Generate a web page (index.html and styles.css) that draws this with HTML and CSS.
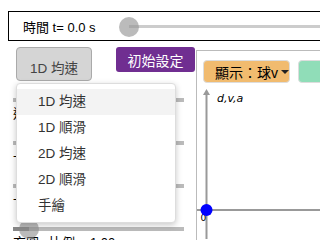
FILE: index.html
```html
<!DOCTYPE html>
<html>
	<head>
		<link rel="stylesheet" href="styles.css">
	</head>
	<body>
		<div class="timebar">
			<span class="time-label">時間 t= 0.0 s</span>
			<div class="slider">
				<div class="slider-track"></div>
				<div class="slider-thumb"></div>
			</div>
		</div>

		<div class="main">
			<div class="left">
				<div class="btn-row">
					<div class="dropdown">
						<button class="mode-btn">1D 均速</button>
						<ul class="menu">
							<li class="active">1D 均速</li>
							<li>1D 順滑</li>
							<li>2D 均速</li>
							<li>2D 順滑</li>
							<li>手繪</li>
						</ul>
					</div>
					<button class="reset-btn">初始設定</button>
				</div>

				<div class="ctrls">
					<div class="ctrl">
						<div class="track"></div>
						<div class="ctrl-label">速度 v = 1.00</div>
					</div>
					<div class="ctrl">
						<div class="track"></div>
						<div class="ctrl-label">一 加速度 a = 0.00</div>
					</div>
					<div class="ctrl">
						<div class="track"></div>
						<div class="ctrl-label">一 初位置 d = 0.00</div>
					</div>
					<div class="ctrl">
						<div class="track">
							<span class="track-fill"></span>
							<span class="track-knob"></span>
						</div>
						<div class="ctrl-label">方圓 x比例 = 1.00</div>
					</div>
				</div>
			</div>

			<div class="graph">
				<div class="graph-btns">
					<button class="show-btn">顯示：球v<span class="caret"></span></button>
					<button class="plot-btn"><span class="plot-text">圖表</span></button>
				</div>
				<svg class="plot" width="124" height="150" viewBox="0 0 124 150">
					<line x1="0" y1="121" x2="124" y2="121" stroke="#999" stroke-width="2"/>
					<line x1="9.5" y1="5" x2="9.5" y2="150" stroke="#999" stroke-width="2"/>
					<polygon points="9.5,0 6,6 13,6" fill="#999"/>
					<text x="20" y="13" class="axis-name">d,v,a</text>
					<text x="3.5" y="132" class="axis-zero">0</text>
					<circle cx="9.5" cy="121" r="6" fill="#0000ff"/>
				</svg>
			</div>
		</div>
	</body>
</html>
```

FILE: styles.css
```css
html, body {
	margin: 0;
	width: 320px;
	height: 240px;
	overflow: hidden;
}

body {
	font-family: "Liberation Sans", "Noto Sans CJK TC", sans-serif;
	font-size: 13px;
	color: #000;
	background: #fff;
}

button {
	font-family: inherit;
	margin: 0;
	cursor: pointer;
}

/* time bar */
.timebar {
	margin: 11px 0 0 8px;
	height: 28px;
	border: 1px solid #000;
	border-right: 0;
	display: flex;
	align-items: center;
}
.time-label {
	width: 96px;
	padding-left: 14px;
	flex: none;
}
.slider {
	position: relative;
	flex: 1;
	height: 20px;
	margin-top: 2px;
}
.slider-track {
	position: absolute;
	left: 10px;
	right: 0;
	top: 8px;
	height: 3px;
	background: #ccc;
}
.slider-thumb {
	position: absolute;
	left: 0;
	top: 0;
	width: 20px;
	height: 20px;
	border-radius: 50%;
	background: rgba(150, 150, 150, 0.65);
}

/* main area */
.main {
	display: flex;
	margin-top: 6px;
}
.left {
	width: 196px;
	flex: none;
}
.btn-row {
	display: flex;
	justify-content: space-between;
	align-items: flex-start;
	padding: 0 1px 0 16px;
}

.dropdown {
	position: relative;
}
.mode-btn {
	display: flex;
	align-items: center;
	box-sizing: border-box;
	height: 34px;
	padding: 5px 13px 0;
	font-size: 13.5px;
	color: #444;
	background: #d5d5d5;
	border: 1px solid #aaa;
	border-radius: 4px;
}
.reset-btn {
	box-sizing: border-box;
	width: 79px;
	height: 25px;
	padding: 0;
	font-size: 14px;
	color: #fff;
	background: #702e91;
	border: 0;
	border-radius: 3px;
}

.menu {
	position: absolute;
	z-index: 2;
	left: 0;
	top: 36px;
	box-sizing: border-box;
	width: 160px;
	height: 140px;
	margin: 0;
	padding: 5px 0 3px;
	list-style: none;
	background: #fff;
	border: 1px solid #ddd;
	border-radius: 4px;
	box-shadow: 0 2px 6px rgba(0, 0, 0, 0.22);
}
.menu li {
	height: 26px;
	line-height: 26px;
	padding-left: 21px;
	font-size: 13.5px;
	color: #333;
}
.menu li.active {
	background: #f3f3f3;
}

/* sliders under the menu */
.ctrls {
	margin-top: 17px;
	padding-left: 13px;
}
.ctrl {
	width: 171px;
	height: 43px;
}
.track {
	position: relative;
	height: 4px;
	background: #bbb;
}
.track-fill {
	position: absolute;
	left: 0;
	top: 0;
	width: 16px;
	height: 4px;
	background: #888;
}
.track-knob {
	position: absolute;
	left: 6px;
	top: -8px;
	width: 20px;
	height: 20px;
	border-radius: 50%;
	background: rgba(140, 140, 140, 0.6);
}
.ctrl-label {
	margin-top: 5px;
	line-height: 14px;
	white-space: nowrap;
}

/* graph */
.graph {
	flex: 1;
	margin-top: 3px;
	border-top: 1px solid #bbb;
	border-left: 1px solid #bbb;
	min-width: 0;
}
.graph-btns {
	display: flex;
	gap: 8px;
	padding: 9px 0 0 6px;
	white-space: nowrap;
}
.show-btn {
	display: flex;
	align-items: center;
	box-sizing: border-box;
	width: 97px;
	height: 23px;
	padding: 0 0 0 11px;
	font-size: 14px;
	color: #000;
	background: #f1bb6f;
	border: 1px solid #ddd;
	border-radius: 4px;
}
.caret {
	width: 0;
	height: 0;
	margin-left: 3px;
	border-left: 4px solid transparent;
	border-right: 4px solid transparent;
	border-top: 4px solid #222;
}
.plot-btn {
	flex: none;
	display: flex;
	align-items: center;
	box-sizing: border-box;
	width: 80px;
	height: 23px;
	padding: 0;
	font-size: 14px;
	background: #90ddb8;
	border: 1px solid #ddd;
	border-radius: 4px;
}
.plot-text {
	margin-left: 24px;
}
.plot {
	display: block;
	margin-top: 6px;
}
.axis-name {
	font-family: "DejaVu Sans", sans-serif;
	font-size: 11px;
	font-style: italic;
}
.axis-zero {
	font-family: "DejaVu Sans", sans-serif;
	font-size: 9px;
}
```
